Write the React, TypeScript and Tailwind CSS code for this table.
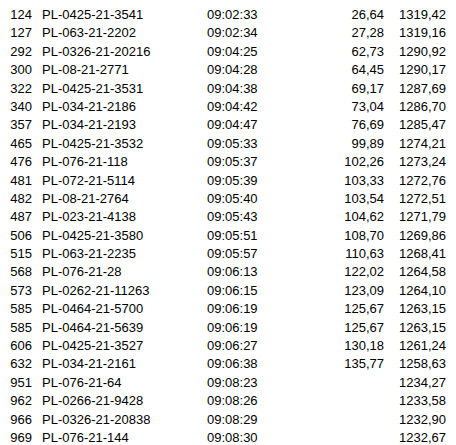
const rows: [string, string, string, string, string][] = [
  ['124', 'PL-0425-21-3541', '09:02:33', '26,64', '1319,42'],
  ['127', 'PL-063-21-2202', '09:02:34', '27,28', '1319,16'],
  ['292', 'PL-0326-21-20216', '09:04:25', '62,73', '1290,92'],
  ['300', 'PL-08-21-2771', '09:04:28', '64,45', '1290,17'],
  ['322', 'PL-0425-21-3531', '09:04:38', '69,17', '1287,69'],
  ['340', 'PL-034-21-2186', '09:04:42', '73,04', '1286,70'],
  ['357', 'PL-034-21-2193', '09:04:47', '76,69', '1285,47'],
  ['465', 'PL-0425-21-3532', '09:05:33', '99,89', '1274,21'],
  ['476', 'PL-076-21-118', '09:05:37', '102,26', '1273,24'],
  ['481', 'PL-072-21-5114', '09:05:39', '103,33', '1272,76'],
  ['482', 'PL-08-21-2764', '09:05:40', '103,54', '1272,51'],
  ['487', 'PL-023-21-4138', '09:05:43', '104,62', '1271,79'],
  ['506', 'PL-0425-21-3580', '09:05:51', '108,70', '1269,86'],
  ['515', 'PL-063-21-2235', '09:05:57', '110,63', '1268,41'],
  ['568', 'PL-076-21-28', '09:06:13', '122,02', '1264,58'],
  ['573', 'PL-0262-21-11263', '09:06:15', '123,09', '1264,10'],
  ['585', 'PL-0464-21-5700', '09:06:19', '125,67', '1263,15'],
  ['585', 'PL-0464-21-5639', '09:06:19', '125,67', '1263,15'],
  ['606', 'PL-0425-21-3527', '09:06:27', '130,18', '1261,24'],
  ['632', 'PL-034-21-2161', '09:06:38', '135,77', '1258,63'],
  ['951', 'PL-076-21-64', '09:08:23', '', '1234,27'],
  ['962', 'PL-0266-21-9428', '09:08:26', '', '1233,58'],
  ['966', 'PL-0326-21-20838', '09:08:29', '', '1232,90'],
  ['969', 'PL-076-21-144', '09:08:30', '', '1232,67'],
];

export default function App() {
  return (
    <div
      className="w-[456px] h-[445px] overflow-hidden bg-white pt-[6px] text-[13px] text-black"
      style={{ fontFamily: '"Liberation Sans", Arial, sans-serif' }}
    >
      {rows.map((r, i) => (
        <div key={i} className="flex h-[18.4px] items-center leading-[18.4px] whitespace-nowrap">
          <span className="w-[32px] text-right">{r[0]}</span>
          <span className="ml-[10px] w-[165px]">{r[1]}</span>
          <span className="w-[120px]">{r[2]}</span>
          <span className="w-[57px] text-right">{r[3]}</span>
          <span className="w-[62px] text-right">{r[4]}</span>
        </div>
      ))}
    </div>
  );
}
